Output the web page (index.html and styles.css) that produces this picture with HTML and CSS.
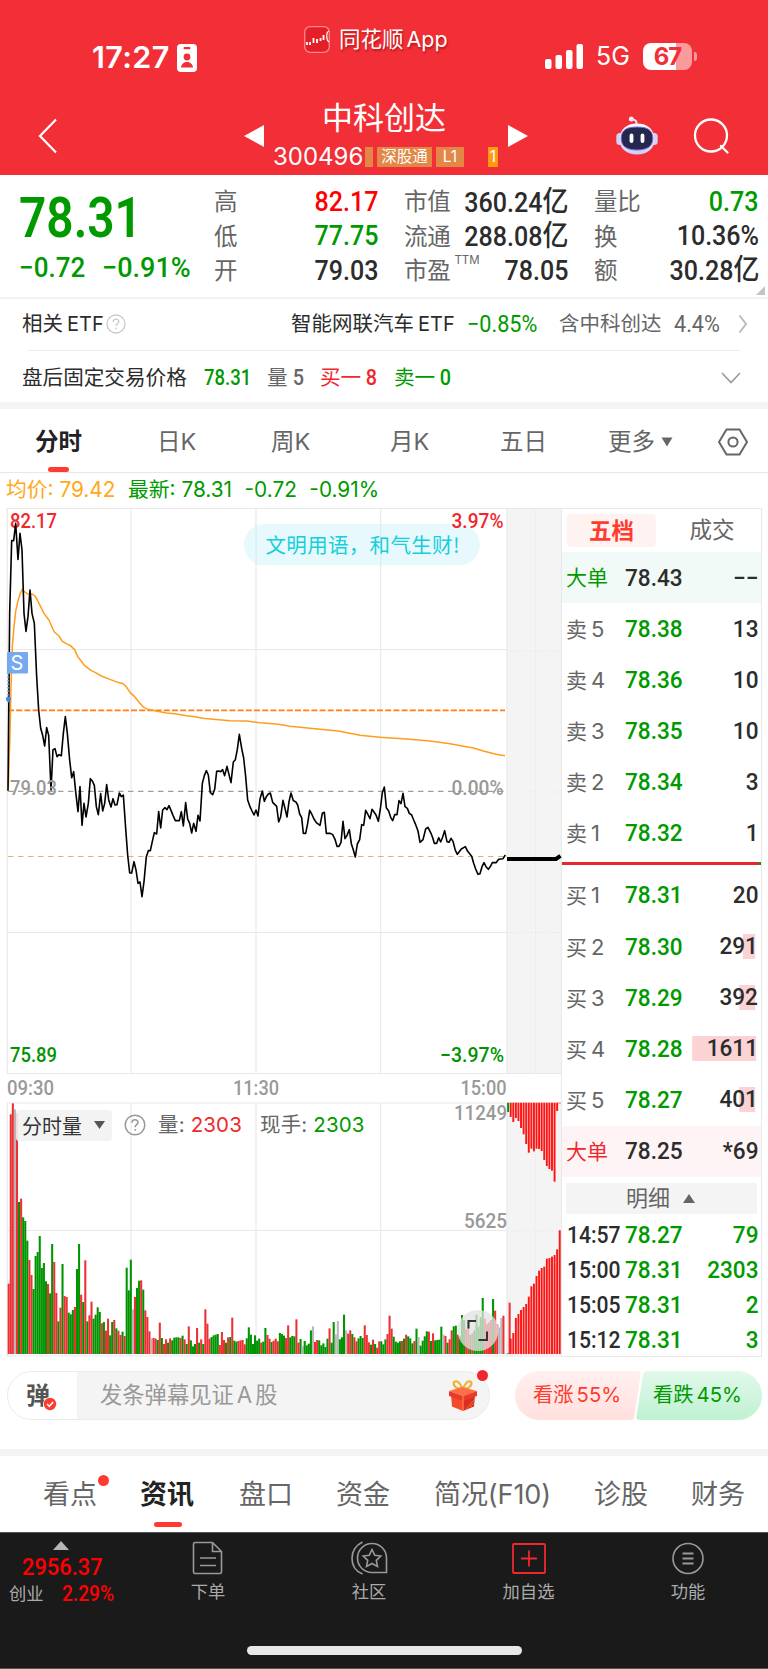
FILE: index.html
```html
<!DOCTYPE html>
<html lang="zh-CN">
<head>
<meta charset="utf-8">
<title>中科创达 300496</title>
<link rel="stylesheet" href="styles.css">
</head>
<body>
<header class="top">
  <div class="status">
    <div class="clock"><b>17:27</b>
      <svg width="20" height="28" viewBox="0 0 20 28"><rect width="20" height="28" rx="4" fill="#fff"/><rect x="6.5" y="3" width="7" height="2.2" rx="1" fill="#f22f37"/><circle cx="10" cy="13" r="3.4" fill="#f22f37"/><path d="M4 23.500c.5-7.500 11.500-7.500 12 0z" fill="#f22f37"/></svg>
    </div>
    <div class="app-name">
      <svg width="26" height="27" viewBox="0 0 26 27"><rect x=".7" y=".7" width="24.600" height="25.600" rx="5.500" fill="#e51f27" stroke="#f8898d" stroke-width="1.300"/><path d="M3 16v3M6 16v3M9.500 12v5M13 13v4M16.500 12v3M19.500 9v5" stroke="#fff" stroke-width="1.800"/><path d="M25 5c-3 1-3 9 0 11" fill="none" stroke="#fff" stroke-width="1.200"/></svg>
      <span>同花顺<i>App</i></span>
    </div>
    <div class="signal">
      <svg width="38" height="25" viewBox="0 0 38 25" fill="#fff"><rect y="15" width="6.500" height="10" rx="2"/><rect x="10.500" y="11" width="6.500" height="14" rx="2"/><rect x="21" y="6" width="6.500" height="19" rx="2"/><rect x="31.500" width="6.500" height="25" rx="2"/></svg>
      <span class="net">5G</span>
      <span class="battery">67</span><span class="nub"></span>
    </div>
  </div>
  <div class="nav">
    <svg class="back" width="20" height="36" viewBox="0 0 20 36"><path d="M18 1.500 2 18l16 16.500" fill="none" stroke="#fff" stroke-width="2.200"/></svg>
    <svg class="prev" width="20" height="22" viewBox="0 0 20 22"><path d="M20 0v22L0 11z" fill="#fff"/></svg>
    <div class="title">
      <h1>中科创达</h1>
      <div class="code"><span>300496</span><em class="cut"></em><em>深股通</em><em class="l1">L1</em><em class="hot">1</em></div>
    </div>
    <svg class="next" width="20" height="22" viewBox="0 0 20 22"><path d="M0 0v22L20 11z" fill="#fff"/></svg>
    <svg class="robot" width="42" height="40" viewBox="0 0 42 40"><defs><linearGradient id="shell" x2="0" y2="1"><stop stop-color="#fff"/><stop offset="1" stop-color="#cfcdf3"/></linearGradient></defs><path d="M20.500 9c.5-4-1-5.500-4.500-5.500" fill="none" stroke="#dfe3f5" stroke-width="2"/><circle cx="15.300" cy="3" r="2.500" fill="#e6e8f6"/><rect x=".3" y="17" width="7" height="12" rx="3.500" fill="#d2d2f4"/><rect x="34.700" y="17" width="7" height="12" rx="3.500" fill="#d2d2f4"/><path d="M21 7.500c10.500 0 17.500 6 17.500 16 0 9.500-7.500 15-17.500 15s-17.500-5.500-17.500-15c0-10 7-16 17.500-16z" fill="url(#shell)"/><path d="M21 11c10 0 15.800 2.500 15.800 11.500 0 8-6 11.500-15.800 11.500S5.200 30.500 5.200 22.500C5.200 13.500 11 11 21 11z" fill="#24284f" stroke="#8169dc" stroke-width="1"/><path d="M15.500 19.500v5.500M26.500 19.500v5.500" stroke="#fff" stroke-width="3.800" stroke-linecap="round"/></svg>
    <svg class="search" width="38" height="38" viewBox="0 0 38 38" fill="none" stroke="#fff" stroke-width="2.300"><circle cx="18" cy="17.500" r="16"/><path d="M28 28 34.500 34.500" stroke-linecap="round"/></svg>
  </div>
</header>

<section class="quote">
  <div class="price">
    <strong class="down"><span class="din">78.31</span></strong>
    <div class="down"><span class="din">−0.72</span><span class="din pct">−0.91%</span></div>
  </div>
  <dl>
    <div><dt>高</dt><dd class="red">82.17</dd></div>
    <div><dt>低</dt><dd class="down">77.75</dd></div>
    <div><dt>开</dt><dd>79.03</dd></div>
  </dl>
  <dl>
    <div><dt>市值</dt><dd>360.24<u>亿</u></dd></div>
    <div><dt>流通</dt><dd>288.08<u>亿</u></dd></div>
    <div><dt>市盈<sup>TTM</sup></dt><dd>78.05</dd></div>
  </dl>
  <dl>
    <div><dt>量比</dt><dd class="down">0.73</dd></div>
    <div><dt>换</dt><dd>10.36%</dd></div>
    <div><dt>额</dt><dd>30.28<u>亿</u></dd></div>
  </dl>
  <svg class="corner" width="9" height="9" viewBox="0 0 9 9"><path d="M9 0v9H0z" fill="#c4c4c4"/></svg>
</section>

<section class="etf">
  <span class="name">相关<i>ETF</i></span>
  <svg width="20" height="20" viewBox="0 0 20 20" fill="none" stroke="#c8c8c8" stroke-width="1.300"><circle cx="10" cy="10" r="9"/><path d="M7.200 8c0-4 5.600-3.700 5.600-.4 0 2-2.700 2.200-2.700 4.400M10.100 13.800v1.600"/></svg>
  <span class="fund">智能网联汽车<i>ETF</i></span>
  <span class="din down">−0.85%</span>
  <span class="gray has">含中科创达</span>
  <span class="din gray">4.4%</span>
  <svg class="go" width="10" height="20" viewBox="0 0 10 20"><path d="M1.500 1.500 8 10l-6.500 8.500" fill="none" stroke="#bbb" stroke-width="2"/></svg>
</section>
<section class="after">
  <span>盘后固定交易价格</span>
  <span class="din down">78.31</span>
  <span class="gray">量<i>5</i></span>
  <span class="up">买一<i>8</i></span>
  <span class="down">卖一<i>0</i></span>
  <svg width="20" height="12" viewBox="0 0 20 12"><path d="m1 1 9 9.500L19 1" fill="none" stroke="#999" stroke-width="1.600"/></svg>
</section>

<nav class="periods">
  <b>分时</b><span>日K</span><span>周K</span><span>月K</span><span>五日</span><span>更多</span>
  <svg width="12" height="10" viewBox="0 0 12 10"><path d="M.5.500h11L6 9.500z" fill="#666"/></svg>
  <svg width="30" height="28" viewBox="0 0 30 28" fill="none" stroke="#666" stroke-width="2"><path d="M8.500 1.500h13L29 14l-7.500 12.500h-13L1 14z"/><circle cx="15" cy="14" r="4.600"/></svg>
</nav>
<div class="legend"><span class="avg">均价: 79.42</span><span>最新: 78.31</span><span>-0.72</span><span>-0.91%</span></div>

<main class="board">
  <div class="chart">
    <svg class="plot" width="562" height="850" viewBox="0 507 562 850">
      <rect x="507" y="508" width="55" height="566" fill="#f4f4f4"/>
      <rect x="507" y="1103" width="55" height="253" fill="#f4f4f4"/>
      <g stroke="#e9e9e9" stroke-width="1.200" fill="none">
        <path d="M7 508.500H562M7 649.500H507M7 932.500H507M7 1073.500H562M7 1103H562M7 1230.500H507M7 1356H562M7.300 508V1074M131 508V1074M256 508V1074M380.700 508V1074M507 508V1074M7.300 1103V1356M131 1103V1356M256 1103V1356M380.700 1103V1356M507 1103V1356M561.500 508V1356"/>
        <path d="M535.500 508V1074M535.500 1103V1356M507 651H562M507 792H562M507 932.500H562M507 1231H562" stroke-dasharray="1.500 1.500"/>
      </g>
      <rect x="244" y="524" width="236" height="41.500" rx="20.700" fill="#e7f9fd"/>
      <path d="M256 524V565.500M380.700 524V565.500" stroke="#d6eaee" stroke-width="1"/>
      <path d="M8 710.300H505" stroke="#ff7d1a" stroke-width="1.800" stroke-dasharray="6 2.200"/>
      <path d="M8 791.300H505" stroke="#888" stroke-width="1" stroke-dasharray="5.500 4.500"/>
      <path d="M8 856.500H505" stroke="#e0b070" stroke-width="1" stroke-dasharray="5.500 4.500"/>
      <g class="axis">
        <text x="10" y="528" textLength="47" lengthAdjust="spacingAndGlyphs" fill="#f0282d">82.17</text>
        <text x="451.500" y="528" textLength="52" lengthAdjust="spacingAndGlyphs" fill="#f0282d">3.97%</text>
        <text x="10" y="1061.500" textLength="47" lengthAdjust="spacingAndGlyphs" fill="#009400">75.89</text>
        <text x="440" y="1061.500" textLength="64" lengthAdjust="spacingAndGlyphs" fill="#009400">−3.97%</text>
      </g>
      <g class="axis light">
        <text x="7" y="1094.500" textLength="47" lengthAdjust="spacingAndGlyphs">09:30</text>
        <text x="233" y="1094.500" textLength="46" lengthAdjust="spacingAndGlyphs">11:30</text>
        <text x="460.500" y="1094.500" textLength="46" lengthAdjust="spacingAndGlyphs">15:00</text>
        <text x="454" y="1120" textLength="53" lengthAdjust="spacingAndGlyphs">11249</text>
        <text x="464" y="1228" textLength="43" lengthAdjust="spacingAndGlyphs">5625</text>
      </g>
      <text class="notice" x="265.500" y="553" textLength="194">文明用语，和气生财!</text>
      <g transform="translate(0 500) scale(.333333)" fill="none" stroke-linejoin="round">
        <path stroke="#ff9d1e" stroke-width="4.500" d="M25 860 30 700 33 560 37 440 42 380 47 335 54 302 61 280 67 268 73 275 82 281 91 282 98 283 105 288 112 300 122 320 132 340 140 351 148 362 158 386 163 396 177 408 187 424 199 431 211 437 224 449 233 470 246 486 253 496 273 511 285 517 304 528 330 538 353 547 370 551 380 562 390 577 403 589 416 605 428 619 440 627 468 633 500 639 530 642 560 647 590 651 608 655 640 658 690 662 740 663 780 668 835 673 870 679 915 683 960 688 1015 693 1080 706 1140 712 1230 718 1290 723 1350 731 1420 744 1450 753 1488 763 1515 767"/>
        <path stroke="#000" stroke-width="4.800" d="M24 872 29 340 35 122H41L47 70 54 178 60 100 66 150 72 340 78 394 84 350 90 270 96 340 103 370 110 530 116 630 122 685 128 706 134 738 140 683 146 706 153 870 159 749 165 746 171 770 177 764 184 767 190 700 196 650 202 700 209 780 215 833 221 815 227 875 234 935 240 860 246 976 252 910 258 951 265 910 271 836 277 843 283 856 289 920 295 944 302 881 308 933 314 910 320 854 326 899 333 921 339 896 345 915 351 914 358 879 364 890 370 885 377 985 383 1065 389 1119H395L402 1085 408 1110 414 1150 420 1146 426 1190 432 1145 439 1070 445 1052H451L457 1024 463 998 470 1002 476 935 482 984 488 930 495 923 501 929 507 917 513 931 519 946 526 962H538L544 935 550 978 557 908 563 957 569 970 575 999 581 970 588 994 594 946 600 963 607 850 613 827 619 812 625 825 631 878 638 884 644 868 650 814 656 813 662 815 668 809 674 827 681 799 687 824 693 848 700 786 706 779 712 748 718 703 725 745 731 774 737 830 743 900 750 920 756 933 762 945 768 930 774 948 780 897 787 873 793 904 799 890 805 882 811 879 818 907 830 919 836 966 842 950 849 901 855 925 861 951 867 905 873 879 880 902 887 905 893 915 899 942 905 953 910 1000 917 1000 923 970 929 931 935 942 942 957 949 968 960 976 967 940 973 937 979 1000 991 1000 998 1004 1005 1018 1011 1039 1017 1039 1023 1027 1029 964 1035 1016 1041 1006 1048 989 1054 1031 1060 1050 1066 1071 1072 1032 1079 1019 1085 974 1091 976 1097 931 1103 942 1110 956 1116 928 1122 936 1128 945 1135 964 1141 927 1147 878 1153 861 1159 923 1166 933 1172 952 1178 962 1184 944 1191 944 1197 902 1203 911 1209 880 1215 920 1222 925 1228 940 1235 945 1241 960 1247 974 1254 993 1260 1027 1269 1019 1277 987 1284 982 1293 1000 1298 1013 1303 1030 1310 1030 1316 1013 1322 1026 1328 1011 1334 992 1341 1025 1347 1027 1353 1015 1359 1024 1366 1051 1372 1063 1384 1047 1396 1040 1403 1054 1415 1069 1421 1090 1427 1107 1434 1123 1440 1121 1446 1100 1452 1088 1458 1100 1465 1108 1472 1098 1477 1088 1488 1088 1496 1078 1509 1076 1516 1065"/>
      </g>
      <path d="M507 859H556L560.500 855.800" stroke="#000" stroke-width="4" fill="none"/>
      <g class="axis light">
        <text x="10" y="795" textLength="47" lengthAdjust="spacingAndGlyphs">79.03</text>
        <text x="451.500" y="795" textLength="52" lengthAdjust="spacingAndGlyphs">0.00%</text>
      </g>
      <path d="M8 673V703" stroke="#7db0ee" stroke-width="1.500" stroke-dasharray="1.500 2"/>
      <circle cx="8.500" cy="699" r="2.500" fill="#3e87dc"/>
      <rect x="7" y="652" width="21" height="21.500" rx="1" fill="#75aaf0"/>
      <text class="sell" x="10.500" y="670">S</text>
      <g id="volume" transform="translate(0 1030) scale(.333333)"></g>
      <circle cx="478" cy="1330.500" r="20.500" fill="#e2e2e2" fill-opacity=".76"/>
      <path d="M468.500 1328.500V1321H476M478.500 1340H487V1331.500" fill="none" stroke="#333" stroke-width="2"/>
    </svg>
    <div class="vol-bar">
      <button>分时量<svg width="11" height="8" viewBox="0 0 11 8"><path d="M0 0h11L5.500 8z" fill="#555"/></svg></button>
      <svg width="22" height="22" viewBox="0 0 22 22" fill="none" stroke="#999" stroke-width="1.500"><circle cx="11" cy="11" r="9.800"/><path d="M8 8.800c0-4.300 6-4 6-.4 0 2.200-2.900 2.300-2.900 4.800M11.100 15v1.800"/></svg>
      <span>量: <i class="up">2303</i></span>
      <span>现手: <i class="down">2303</i></span>
    </div>
  </div>

  <aside class="book">
    <div class="book-tabs"><b>五档</b><span>成交</span></div>
    <div class="lvl big sell"><span>大单</span><b>78.43</b><b>−−</b></div>
    <div class="lvl"><span>卖<i>5</i></span><b class="down">78.38</b><b>13</b></div>
    <div class="lvl"><span>卖<i>4</i></span><b class="down">78.36</b><b>10</b></div>
    <div class="lvl"><span>卖<i>3</i></span><b class="down">78.35</b><b>10</b></div>
    <div class="lvl"><span>卖<i>2</i></span><b class="down">78.34</b><b>3</b></div>
    <div class="lvl"><span>卖<i>1</i></span><b class="down">78.32</b><b>1</b></div>
    <hr>
    <div class="lvl"><span>买<i>1</i></span><b class="down">78.31</b><b>20</b></div>
    <div class="lvl"><span>买<i>2</i></span><b class="down">78.30</b><b class="depth" style="--w:13px">291</b></div>
    <div class="lvl"><span>买<i>3</i></span><b class="down">78.29</b><b class="depth" style="--w:17px">392</b></div>
    <div class="lvl"><span>买<i>4</i></span><b class="down">78.28</b><b class="depth" style="--w:68px">1611</b></div>
    <div class="lvl"><span>买<i>5</i></span><b class="down">78.27</b><b class="depth" style="--w:17px">401</b></div>
    <div class="lvl big buy"><span>大单</span><b>78.25</b><b>*69</b></div>
    <div class="more">明细<svg width="12" height="9" viewBox="0 0 12 9"><path d="M6 0l6 9H0z" fill="#666"/></svg></div>
    <div class="tick"><b>14:57</b><b class="down">78.27</b><b class="down">79</b></div>
    <div class="tick"><b>15:00</b><b class="down">78.31</b><b class="down">2303</b></div>
    <div class="tick"><b>15:05</b><b class="down">78.31</b><b class="down">2</b></div>
    <div class="tick"><b>15:12</b><b class="down">78.31</b><b class="down">3</b></div>
  </aside>
</main>

<section class="chat">
  <div class="input">
    <div class="dan">弹<svg width="14" height="14" viewBox="0 0 14 14"><circle cx="7" cy="7" r="7" fill="#fff"/><circle cx="7" cy="7" r="6.200" fill="#ff3b30"/><path d="m4 7 2.300 2.300L10.200 5" fill="none" stroke="#fff" stroke-width="1.500"/></svg></div>
    <span class="ph">发条弹幕见证<i>A</i>股</span>
    <svg class="gift" width="30" height="32" viewBox="0 0 30 32"><path d="M14 9C4 9 4 0 9 1.500c3 1 4 4 5.500 7.500M15 9c10 0 10-9 5.500-7.500-3 1-4 4-5.500 7.500" fill="none" stroke="#f2b13a" stroke-width="2.300"/><path d="M3 15l12 4v12L4 26.500z" fill="#f4492c"/><path d="M27 15l-12 4v12l11-4.500z" fill="#d82f20"/><path d="M1 11 14 7l15 4-14 5z" fill="#ff7048"/><path d="M1 11v5l14 5 14-5v-5l-14 5z" fill="#e83a28"/><path d="M15 16v15" stroke="#ff7048" stroke-width="1.500"/><path d="m18 29 8-9M22 27l4-4" stroke="#ef6a3c" stroke-width="1"/></svg>
    <em class="dot"></em>
  </div>
  <div class="vote">
    <svg width="247" height="49" viewBox="0 0 247 49"><defs><linearGradient id="r" x2="0" y2="1"><stop stop-color="#fff0ef"/><stop offset="1" stop-color="#ffe0de"/></linearGradient><linearGradient id="g" x2="0" y2="1"><stop stop-color="#e2f9eb"/><stop offset="1" stop-color="#bff1d2"/></linearGradient></defs><path d="M24.500 0H122q4 0 3.500 4l-6 41q-.5 4-4 4h-91a24.500 24.500 0 0 1 0-49z" fill="url(#r)"/><path d="M133 0h89.500a24.500 24.500 0 0 1 0 49H124.500q-3.500 0-3-4l6.500-41q.5-4 5-4z" fill="url(#g)"/></svg>
    <div class="vote-text"><span class="rise">看涨<i>55%</i></span><span class="down">看跌<i>45%</i></span></div>
  </div>
</section>

<nav class="sections"><span>看点<em class="dot"></em></span><b>资讯</b><span>盘口</span><span>资金</span><span class="f10">简况(F10)</span><span>诊股</span><span>财务</span></nav>

<footer class="dock">
  <div class="index">
    <svg width="16" height="9" viewBox="0 0 16 9"><path d="M8 0l8 9H0z" fill="#b5b5b5"/></svg>
    <b class="din">2956.37</b>
    <div><span>创业</span><b class="din">2.29%</b></div>
  </div>
  <div class="item"><svg width="36" height="34" viewBox="0 0 36 34" fill="none" stroke="#999" stroke-width="1.600"><path d="M5 1.500h17.500l9 9V31q0 1.500-1.500 1.500H5Q3.500 32.500 3.500 31V3Q3.500 1.500 5 1.500zM22.500 1.500v9h9M10 17h16M10 24.500h16"/></svg><span>下单</span></div>
  <div class="item"><svg width="38" height="34" viewBox="0 0 38 34" fill="none" stroke="#999" stroke-width="1.600"><path d="M22 2.500a14.500 14.500 0 1 0 0 29h14.500V17A14.500 14.500 0 0 0 22 2.500zM12.500 1C-1.500 8-1.500 27 12.500 33"/><path d="m22 8.500 2.700 5.700 6.100.8-4.500 4.300 1.200 6.200-5.500-3-5.500 3 1.200-6.200-4.500-4.300 6.100-.8z"/></svg><span>社区</span></div>
  <div class="item"><svg width="36" height="34" viewBox="0 0 36 34" fill="none" stroke="#f0282d" stroke-width="1.800"><rect x="2" y="3" width="32" height="29" rx="1"/><path d="M18 9.500v16M10 17.500h16"/></svg><span>加自选</span></div>
  <div class="item"><svg width="36" height="34" viewBox="0 0 36 34" fill="none" stroke="#999" stroke-width="1.600"><circle cx="18" cy="17.500" r="15"/><path d="M12.500 12.500h11M12.500 17.500h11M12.500 22.500h11" stroke-width="1.900"/></svg><span>功能</span></div>
  <div class="home"></div>
</footer>
<script src="volume.js"></script>
</body>
</html>
```

FILE: styles.css
```css
* { box-sizing: border-box; }
body { margin: 0; width: 768px; height: 1669px; overflow: hidden; background: #fff; color: #2c2c2c; line-height: 1; white-space: nowrap; font-family: Inter, "Noto Sans CJK SC", sans-serif; }
svg { display: block; flex: none; }
i, em, u { font-style: normal; text-decoration: none; }
.down { color: #009a00; }
.up { color: #f0282d; }
.red { color: #f00; }
.gray { color: #666; }
.din { font-family: Roboto, "Noto Sans CJK SC", sans-serif; display: inline-block; transform: scaleX(.89); transform-origin: left; }

.top { height: 175px; background: #f22f37; color: #fff; }
.status { height: 90px; display: grid; grid-template-columns: 304px 241px auto; padding-top: 26px; }
.clock { display: flex; padding: 15px 0 0 92px; height: 48px; align-items: center; gap: 8px; }
.clock b { font-size: 30.500px; font-weight: 600; width: 77px; letter-spacing: .4px; }
.app-name { display: flex; gap: 9px; height: 27px; align-items: center; font-size: 21.500px; text-shadow: 1px 2px 2px #8008; }
.app-name i { margin-left: 3px; }
.signal { display: flex; align-items: center; height: 33px; margin-top: 14px; }
.net { font-size: 25px; margin-left: 13px; width: 47px; }
.battery { width: 49px; height: 27px; border-radius: 8px; background: linear-gradient(90deg, #fff 67%, #f99a9d 67%); color: #f22f37; font-size: 24px; font-weight: 700; line-height: 27px; text-align: center; letter-spacing: -1px; }
.nub { width: 3px; height: 9px; margin-left: 2px; border-radius: 0 3px 3px 0; background: #f99a9d; }
.nav { display: grid; grid-template-columns: 205px 30px 235px 108px 77px auto; padding-left: 38px; }
.back { margin-top: 28px; }
.prev, .next { margin-top: 35px; }
.prev { margin-left: 1px; }
.robot { margin-top: 26px; }
.title { padding-top: 12px; width: 226px; }
.title h1 { margin: 0; font-size: 31px; font-weight: 400; padding-left: 49px; height: 43px; line-height: 32px; }
.code { display: flex; height: 23px; align-items: center; }
.code span { font-size: 24px; width: 92px; letter-spacing: 0; flex: none; }
.code em { height: 20px; width: 55px; margin-right: 4px; background: #e28745; font-size: 15.500px; line-height: 20px; text-align: center; flex: none; }
.code .cut { width: 8px; }
.code .l1 { width: 28px; margin-right: 24px; }
.code .hot { width: 10px; margin: 0; background: #ff9a14; }
.search { margin-top: 28px; }

.quote { height: 123.500px; border-bottom: 2px solid #f2f2f2; display: grid; grid-template-columns: 194px 164px 190px 191px; column-gap: 0; padding: 10px 0 0 20px; }
.quote dl + dl { margin-left: 26px; }
.price strong { display: flex; height: 67px; align-items: center; font-size: 55px; font-weight: 600; margin-left: -1px; }
.price strong .din { transform: scaleX(.87); }
.price div { display: flex; font-size: 28px; font-weight: 500; height: 32px; align-items: center; margin-left: -1px; }
.price div .din { transform: scaleX(.93); }
.price div .din + .din { margin-left: 12px; transform: scaleX(.965); }
dl { margin: 0; }
dl div { display: flex; height: 34.300px; align-items: center; justify-content: space-between; }
dt { font-size: 23.500px; color: #666; letter-spacing: -.3px; display: flex; }
dd { margin: 0; font: 500 28px/1 Roboto, "Noto Sans CJK SC", sans-serif; transform: scaleX(.895); transform-origin: right; }
dd u { font-size: 29px; }
sup { font-size: 11.500px; letter-spacing: 0; margin-left: 4px; margin-top: -4px; }
.corner { position: absolute; left: 756px; top: 286px; }

.etf { height: 51.500px; margin-left: 22px; display: grid; grid-template-columns: 84px 185px 176px 92px 115px 64px auto; align-items: center; font-size: 20.500px; }
.etf i { margin-left: 4px; font-size: 20px; }
.etf .din { font-size: 23px; transform: scaleX(.94); }
.after { height: 52px; border-top: 1.500px solid #ededed; margin: 0 28px; display: grid; grid-template-columns: 176px 63px 53px 74px 327px auto; align-items: center; font-size: 20.600px; padding-top: 3px; }
.after > :first-child { margin-left: -6px; }
.after i { font-family: Roboto; font-weight: 500; font-size: 22px; margin-left: 4px; display: inline-block; transform: scaleX(.9); }
.after .din { font-size: 22px; font-weight: 500; transform: scaleX(.84); }

.periods { border-top: 7px solid #f4f4f4; border-bottom: 1px solid #e8e8e8; height: 71px; display: grid; grid-template-columns: 122px 114px 119px 110px 108px 53px 57px auto; align-items: center; padding: 2px 0 0 35px; font-size: 23.500px; color: #666; position: relative; }
.periods b { color: #222; font-weight: 700; }
.periods::after { content: ""; position: absolute; left: 48px; bottom: 0; width: 21px; height: 5px; border-radius: 2.500px; background: #ff3b30; }
.legend { display: flex; height: 34px; align-items: center; padding: 1px 0 0 6px; font-size: 20.800px; color: #009a00; gap: 12.500px; }
.legend .avg { color: #ffa818; }

.board { display: grid; grid-template-columns: 562px 200px; height: 850px; }
.chart { position: relative; }
.axis { font: 500 20.500px Roboto; }
.axis.light { fill: #999; font-size: 21px; }
.notice { font: 20.500px "Noto Sans CJK SC"; fill: #14cfdc; }
.plot .sell { font: 20px Inter; fill: #fff; }
.vol-bar { position: absolute; left: 16px; top: 602.500px; display: flex; align-items: center; font-size: 20.500px; color: #666; }
.vol-bar button { border: 0; padding: 0 7px 0 6px; width: 96px; height: 31px; background: #f2f2f2e6; border-radius: 3px; display: flex; align-items: center; justify-content: space-between; font: 20px "Noto Sans CJK SC"; color: #333; margin-right: 12px; }
.vol-bar span { margin-left: 12px; letter-spacing: .15px; }
.vol-bar span + span { margin-left: 18px; }

.book { border: 1px solid #e9e9e9; border-left: 0; height: 849px; margin-top: 1px; }
.book-tabs { height: 43px; display: grid; grid-template-columns: 93px 80px; padding-left: 5px; align-items: center; text-align: center; font-size: 22.500px; color: #666; column-gap: 12px; }
.book-tabs b { width: 89px; height: 33px; line-height: 33px; background: #fff3f2; border-radius: 4px; color: #ff3b30; }
.lvl, .tick { height: 51.150px; display: grid; grid-template-columns: 58px 60px 1fr; align-items: center; padding: 0 3px 0 4px; font-size: 21px; color: #666; }
.lvl b, .tick b { font: 500 24px/1 Roboto, sans-serif; color: #2c2c2c; transform: scaleX(.94); transform-origin: left; margin-left: .5px; }
.lvl b.down, .tick b.down { color: #009a00; }
.lvl b:last-child, .tick b:last-child { text-align: right; transform-origin: right; }
.tick b:first-child { transform: scaleX(.88); }
.lvl i { margin-left: 4px; font-size: 22px; }
.lvl b.depth { justify-self: end; line-height: 25px; background: linear-gradient(#fbd3d4, #fbd3d4) right 2.500px top 0 / var(--w) 25px no-repeat; min-width: calc(var(--w) + 3px); }
.big.sell { background: #f1faf6; }
.big.sell span { color: #009a00; }
.big.buy { background: #fff4f5; }
.big.buy span { color: #f0282d; }
hr { height: 3px; border: 0; margin: 3px 0 5px; background: linear-gradient(90deg, #e9262d 197px, #009a00 197px); }
.more { height: 31px; margin: 6px 4px 4px; background: #f4f4f4; display: flex; align-items: center; justify-content: center; gap: 13px; color: #666; font-size: 22px; padding-right: 2px; }
.tick { height: 35px; }

.chat { display: flex; justify-content: space-between; padding: 14px 6px 0 7px; height: 92px; }
.input { width: 483px; height: 49px; border-radius: 25px; border: 1.500px solid #ebebeb; background: linear-gradient(90deg, #fff 69px, #f4f4f4 69px); display: grid; grid-template-columns: 92px 348px auto; align-items: center; position: relative; }
.dan { font-size: 24px; font-weight: 700; color: #555; padding-left: 18px; position: relative; }
.dan svg { position: absolute; left: 35px; top: 13px; }
.ph { font-size: 22.300px; color: #999; }
.ph i { margin: 0 3px; }
.dot { position: absolute; width: 11px; height: 11px; border-radius: 50%; background: #f0282d; }
.input .dot { right: 1px; top: -2px; }
.vote { display: grid; width: 247px; height: 49px; }
.vote > * { grid-area: 1 / 1; }
.vote-text { display: grid; grid-template-columns: 120px auto; padding-left: 18px; align-items: center; font-size: 20.300px; }
.vote-text i { margin-left: 3px; }
.rise { color: #ff3b30; }

.sections { border-top: 7px solid #f4f4f4; height: 83px; display: grid; grid-template-columns: 98px 98px 97px 98px 160px 97px auto; padding: 0 0 0 43px; align-items: center; font-size: 27px; color: #666; position: relative; }
.sections b { color: #222; margin-left: -1px; }
.sections span { position: relative; }
.sections .dot { left: 55px; top: -6px; background: #ff3b30; }
.sections .f10 { letter-spacing: -.1px; }
.sections::after { content: ""; position: absolute; left: 154px; bottom: 5px; width: 28px; height: 5px; border-radius: 2.500px; background: #ff3b30; }

.dock { height: 137px; background: #1a1a1a; border-bottom: 1px solid #555; border-top: 1px solid #555; color: #aaa; display: grid; grid-template-columns: 128px 160px 162px 157px 162px; grid-template-rows: 113px auto; font-size: 17.300px; }
.index { padding: 8px 0 0 9px; }
.index > svg { margin-left: 44px; }
.index > b { font-size: 24px; font-weight: 500; color: #f00; margin: 5px 0 0 13px; transform: scaleX(.91); }
.index > div { display: flex; align-items: center; gap: 18px; margin-top: 4px; }
.index div b { font-size: 22px; font-weight: 500; color: #f00; transform: scaleX(.87); }
.item { display: flex; flex-direction: column; align-items: center; padding-top: 8px; gap: 8px; }
.home { grid-column: 1 / -1; justify-self: center; width: 275px; height: 9px; border-radius: 5px; background: #e8e8e8; }
```

FILE: volume.js
```js
// Each entry is a bar top followed by its colour: r rise, g fall, n flat.
const minute = `761r 253r 220r 238n 250r 516g 506r 562g 573g 632g 690r 735r 777g 678g 666g 618g 714g 699g 754g 762r
790g 642g 696r 789r 874g 833r 702g 798r 801r 848g 853g 840g 831r 717g 642g 794r 816g 691r 874g 856r
815r 866g 854g 832g 846g 880r 876g 902r 866r 916g 876g 870r 895g 902r 915r 905g 918r 713g 781g 689g
838n 801r 774g 752g 751r 779g 841r 861r 904r 925n 924r 926r 930g 878r 924g 942r 928r 938g 925r 931g
923g 922g 922g 924r 917g 928r 942g 889r 931g 949g 942g 894r 938g 928r 942g 838r 881r 926r 921g 916g
914g 912g 945r 906r 930r 938g 922r 921g 863r 932g 935g 933r 931r 930r 943r 925g 892g 914g 942g 916g
932g 926g 938r 935g 894g 915r 926r 936g 932r 926r 934r 909g 912g 917g 924r 886r 922g 918g 919g 868r
938r 927g 947n 933g 946g 941g 901g 889n 936r 930r 931g 946g 940g 951g 926g 895r 938g 876g 913n 873n
928g 922g 854g 901n 911r 901r 912g 922r 934r 925g 918g 924g 886r 915r 937r 944g 929r 942g 953r 934r
934g 943g 928g 912r 857r 896r 920g 935g 938g 934g 933r 926g 914r 919g 925g 940g 933r 896g 921n 947g
932g 919g 904g 905r 933g 910r 931g 930g 929g 890g 914n 918r 938g 928r 901r 889g 887g 914r 919g 855g
870g 898r 875r 915g 910r 901g 854g 890g 862g 804g 866r 882r 877r 870r 807g 842r 883r 892n 864n 857r 970n 972r 818r`.split(/\s+/);
const auctionTop = [246, 261, 276, 264, 273, 294, 313, 342, 368, 356, 364, 356, 357, 363, 390, 408, 417, 422, 455, 243, 220];
const auctionLow = [970, 926, 909, 864, 852, 840, 831, 822, 800, 769, 761, 738, 722, 714, 710, 686, 684, 680, 675, 658, 601];
const fills = { r: '#ee3034', g: '#009400', n: '#b8b8b8' };
const layer = document.getElementById('volume');

function bar(x, top, bottom, width, fill) {
  const rect = document.createElementNS('http://www.w3.org/2000/svg', 'rect');
  Object.entries({ x, y: top, width, height: Math.max(bottom - top, 0), fill }).forEach(([k, v]) => rect.setAttribute(k, v));
  layer.append(rect);
}

minute.forEach((item, i) => bar(23 + i * 6.21, parseInt(item, 10), 972, 6.2, fills[item.slice(-1)]));
auctionTop.forEach((end, i) => bar(1521.5 + i * 7.74, 218, end, 5.8, i ? '#ff1414' : '#009400'));
auctionLow.forEach((start, i) => bar(1521.5 + i * 7.74, start, 972, 5.8, i ? '#ff1414' : '#009400'));
```
